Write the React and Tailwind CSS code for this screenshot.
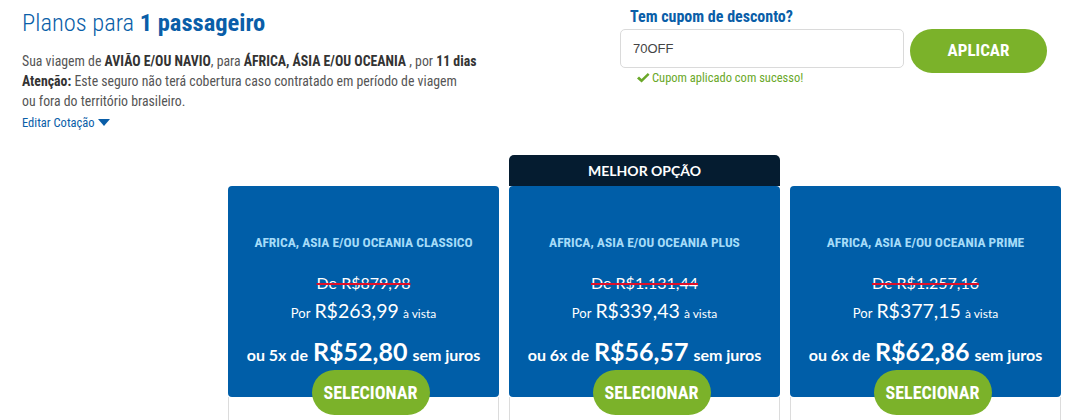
import React from "react";

const cond = { fontFamily: '"Roboto Condensed", "Liberation Sans Narrow", Lato, sans-serif' };

const plans = [
  { name: "AFRICA, ASIA E/OU OCEANIA CLASSICO", de: "R$879,98", por: "R$263,99", n: "5x", parc: "R$52,80", best: false },
  { name: "AFRICA, ASIA E/OU OCEANIA PLUS", de: "R$1.131,44", por: "R$339,43", n: "6x", parc: "R$56,57", best: true },
  { name: "AFRICA, ASIA E/OU OCEANIA PRIME", de: "R$1.257,16", por: "R$377,15", n: "6x", parc: "R$62,86", best: false },
];

function Card({ p }) {
  return (
    <div className="relative flex w-[271px] flex-col">
      {p.best ? (
        <div className="flex h-[31px] items-center justify-center rounded-t-[5px] bg-[#051c30] text-[14px] font-bold text-white" style={{ fontFamily: "Lato, sans-serif" }}>
          MELHOR OPÇÃO
        </div>
      ) : (
        <div className="h-[31px]" />
      )}
      <div className="flex h-[211px] flex-col items-center rounded-[4px] bg-[#005ea8] pt-[47px] text-white" style={{ fontFamily: "Lato, sans-serif" }}>
        <div className="text-[13.5px] font-bold leading-[18px] text-[#a6dcf8]" style={cond}>{p.name}</div>
        <div className="mt-[22px] text-[16px] leading-[20px] line-through decoration-[#e0102a] decoration-[1.5px]">De {p.de}</div>
        <div className="mt-[7px] flex items-baseline gap-[4px] leading-[22px]">
          <span className="text-[13px]">Por</span>
          <span className="text-[19.5px]">{p.por}</span>
          <span className="text-[12px]">à vista</span>
        </div>
        <div className="mt-[12px] flex items-baseline gap-[5px] font-bold leading-[28px]">
          <span className="text-[16px]">ou {p.n} de</span>
          <span className="text-[25px]">{p.parc}</span>
          <span className="text-[16px]">sem juros</span>
        </div>
      </div>
      <div className="h-[40px] border-x border-[#dcdcdc] bg-white" />
      <button className="absolute left-[calc(50%+7px)] top-[215px] flex h-[45px] w-[118px] -translate-x-1/2 items-center justify-center rounded-full bg-[#7bb22a] text-[18px] font-bold text-white" style={cond}>
        SELECIONAR
      </button>
    </div>
  );
}

export default function App() {
  return (
    <div className="relative h-[420px] w-[1076px] overflow-hidden bg-white">
      <div className="flex">
        <div className="w-[620px] pl-[22px] pt-[8px]">
          <h1 className="text-[24.5px] leading-[30px] text-[#0a5ea8]" style={cond}>
            <span className="font-light">Planos para </span>
            <span className="font-bold">1 passageiro</span>
          </h1>
          <div className="mt-[13px] text-[13.8px] leading-[20px] text-[#555]" style={cond}>
            <p>
              Sua viagem de <b className="text-[#333]">AVIÃO E/OU NAVIO</b>, para <b className="text-[#333]">ÁFRICA, ÁSIA E/OU OCEANIA</b> , por <b className="text-[#333]">11 dias</b>
            </p>
            <p>
              <b className="text-[#333]">Atenção:</b> Este seguro não terá cobertura caso contratado em período de viagem
            </p>
            <p>ou fora do território brasileiro.</p>
          </div>
          <div className="mt-[3px] flex items-center gap-[3px] text-[12.5px] text-[#0a5ea8]" style={cond}>
            Editar Cotação
            <svg width="12" height="8" viewBox="0 0 12 8"><path d="M0 0h12L6 7z" fill="#0a5ea8" /></svg>
          </div>
        </div>
        <div className="pt-[6px]">
          <div className="pl-[10px] text-[16px] font-bold leading-[22px] text-[#0a5ea8]" style={cond}>Tem cupom de desconto?</div>
          <div className="mt-[1px] flex gap-[6px]">
            <div className="flex h-[39px] w-[284px] items-center rounded-[5px] border border-[#dadada] pl-[12px] text-[13px] text-[#444]" style={{ fontFamily: '"Liberation Sans", Arial, sans-serif' }}>
              70OFF
            </div>
            <button className="flex h-[44px] w-[137px] items-center justify-center rounded-full bg-[#7bb22a] text-[17px] font-bold text-white" style={cond}>
              APLICAR
            </button>
          </div>
          <div className="-mt-[4px] flex items-center gap-[2px] pl-[16px] text-[12.5px] text-[#6aa829]" style={cond}>
            <svg width="14" height="12" viewBox="0 0 14 12"><path d="M1 6.5l2-2 2.6 2.6L11.8 1 13.5 2.7 5.6 10.6z" fill="#6aa829" /></svg>
            Cupom aplicado com sucesso!
          </div>
        </div>
      </div>
      <div className="absolute left-0 top-[155px] flex gap-[10px] pl-[228px]">
        {plans.map((p) => (
          <Card key={p.name} p={p} />
        ))}
      </div>
    </div>
  );
}
